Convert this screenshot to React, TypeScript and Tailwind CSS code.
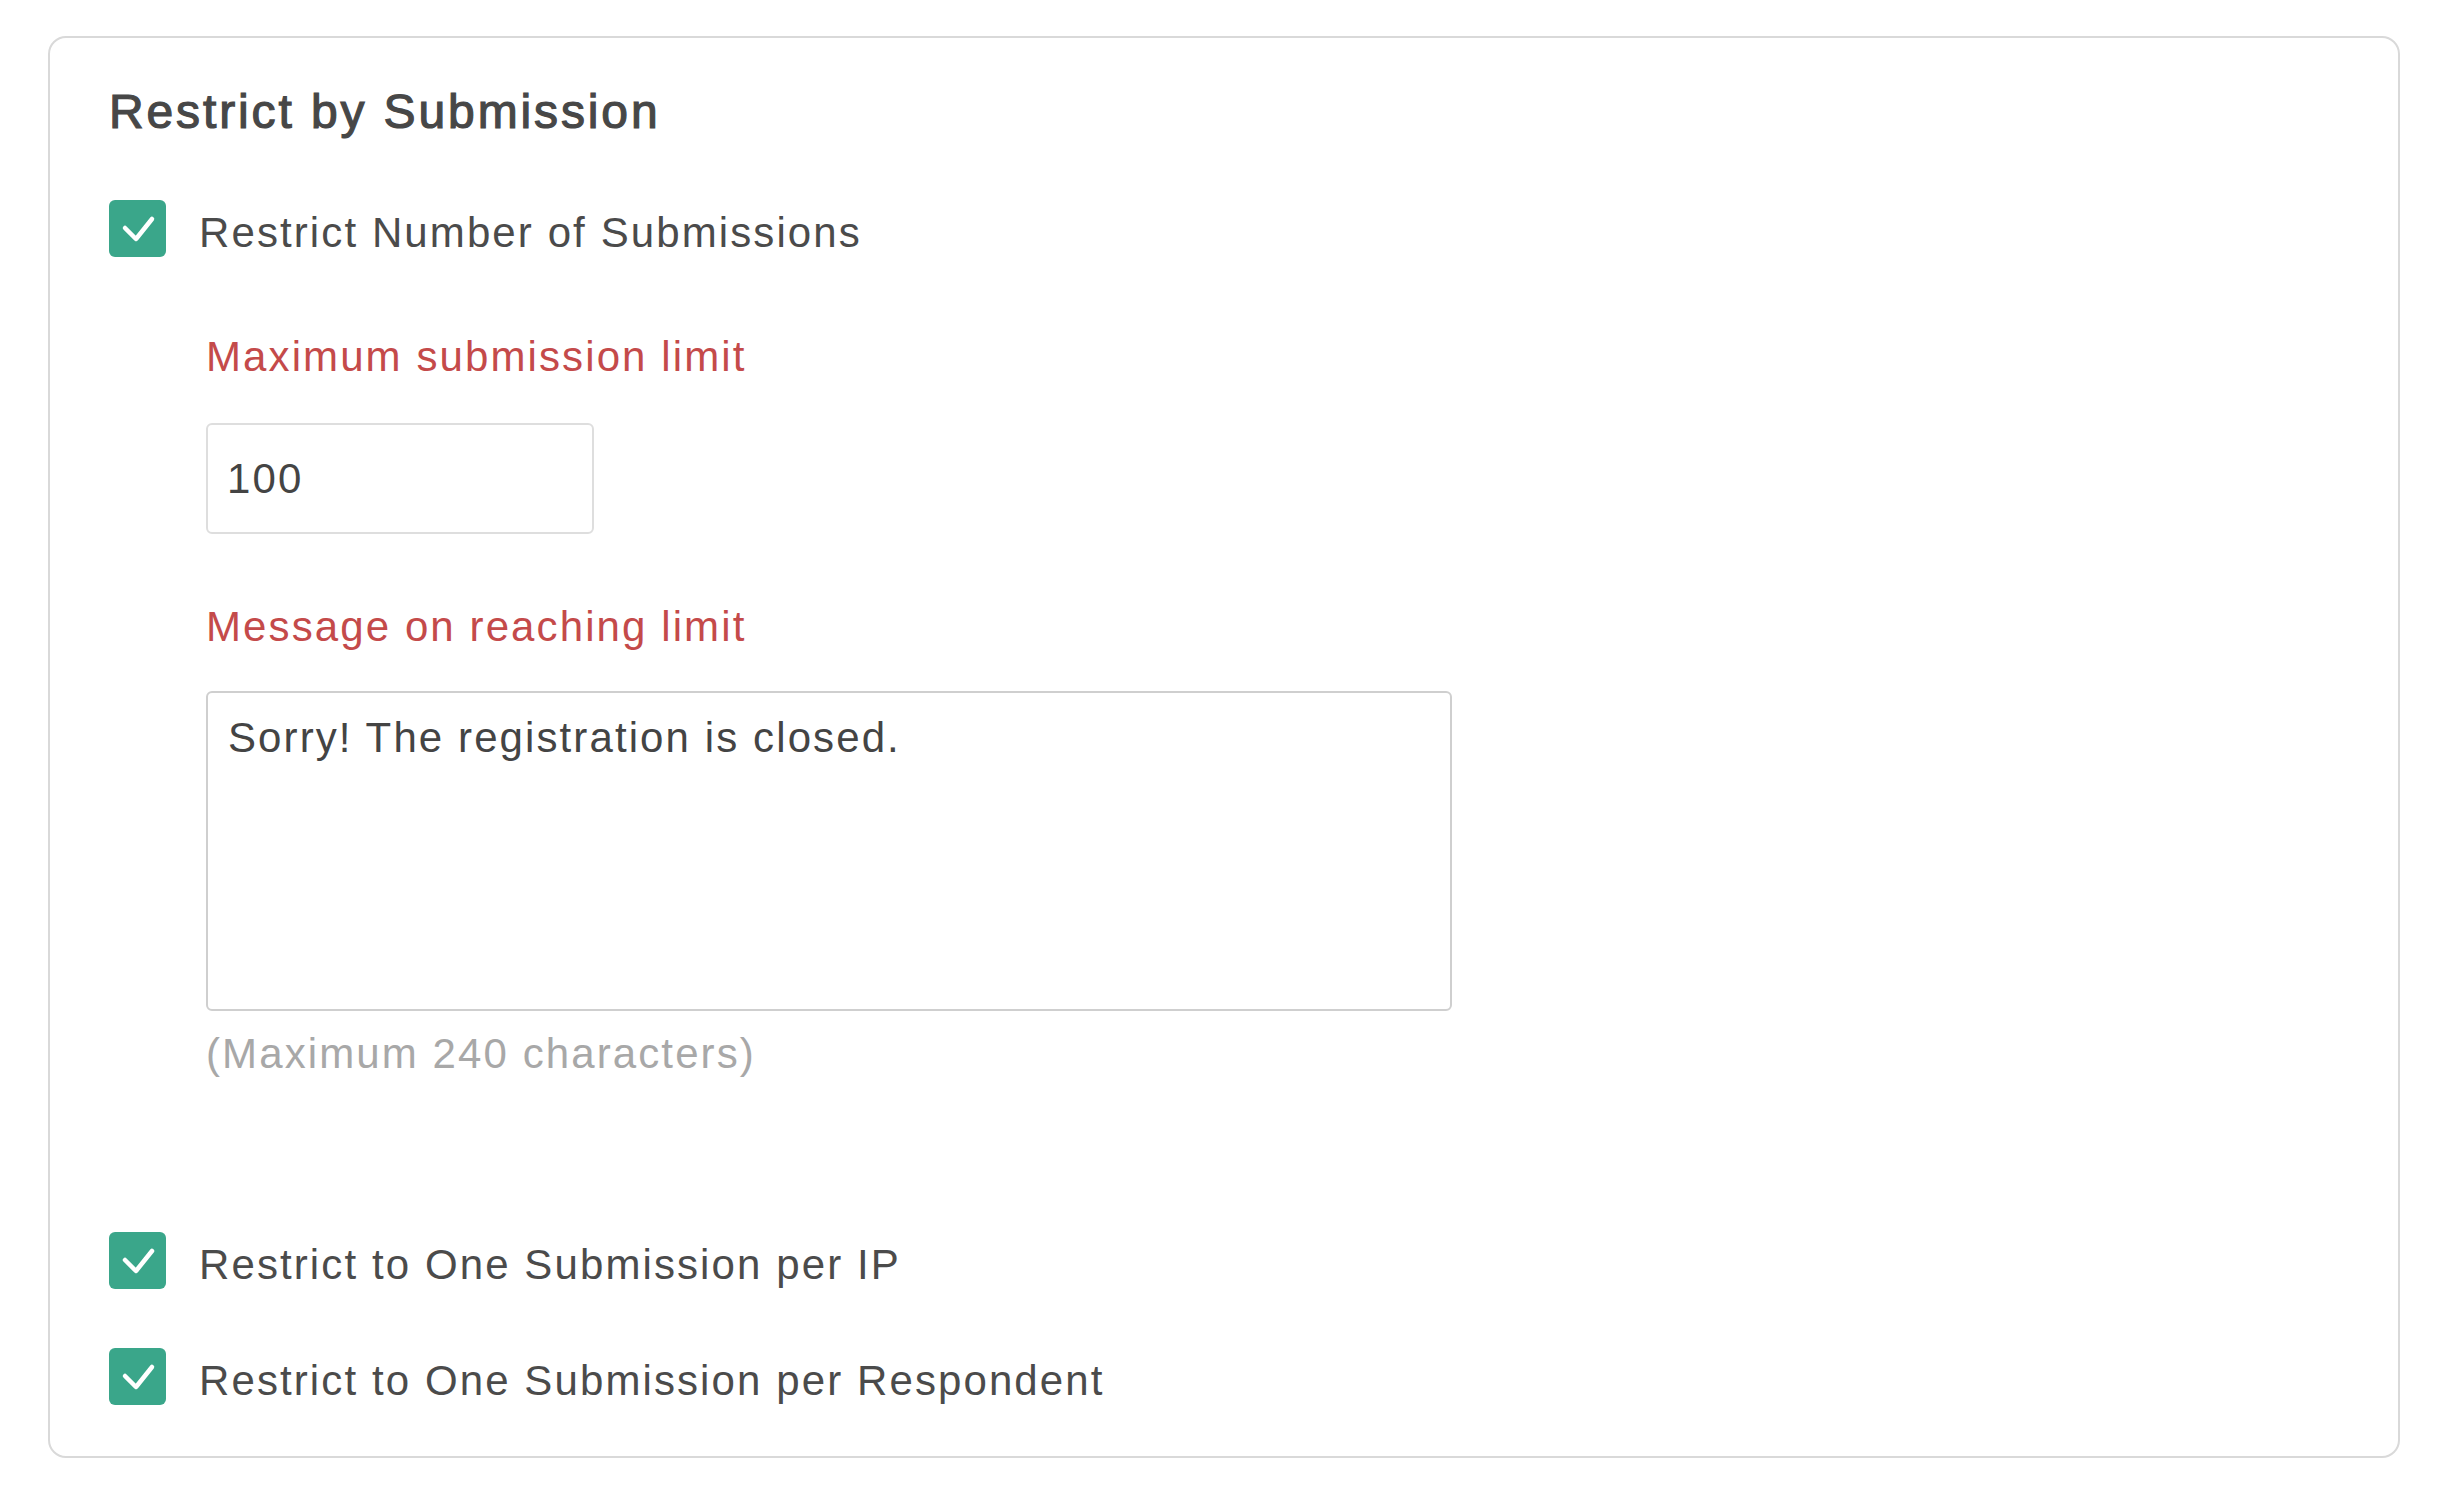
import React from 'react';

const Check = () => (
  <div className="w-[57px] h-[57px] shrink-0 rounded-[6px] bg-[#3aa68a]">
    <svg viewBox="0 0 57 57" className="w-full h-full" fill="none">
      <path d="M16 28l11 11 16-20" stroke="white" strokeWidth={4.5} strokeLinecap="round" strokeLinejoin="round" />
    </svg>
  </div>
);

const Option = ({ label, className = '' }: { label: string; className?: string }) => (
  <div className={`flex items-start ${className}`}>
    <Check />
    <span className="ml-[33px] mt-[12px] text-[42px] leading-[42px] tracking-[0.05em] text-[#4b4b4b]">{label}</span>
  </div>
);

export default function App() {
  return (
    <div className="min-h-screen bg-white pt-[36px] pl-[48px]" style={{ fontFamily: '"Liberation Sans", Arial, sans-serif' }}>
      <div className="w-[2352px] h-[1422px] border-2 border-[#d9d9d9] rounded-[18px] pl-[59px] pt-[50px] flex flex-col">
        <h2 className="text-[48px] leading-[48px] font-normal tracking-[0.06em] text-[#474747] [-webkit-text-stroke:1.2px_#474747]">Restrict by Submission</h2>

        <Option label="Restrict Number of Submissions" className="mt-[64px]" />

        <div className="ml-[97px] flex flex-col items-start">
          <label className="mt-[79px] text-[42px] leading-[42px] tracking-[0.05em] text-[#c44a4a]">Maximum submission limit</label>
          <input
            readOnly
            value="100"
            className="mt-[45px] w-[388px] h-[111px] border-2 border-[#dedede] rounded-[6px] pl-[19px] text-[42px] tracking-[0.05em] text-[#444] outline-none"
          />

          <label className="mt-[72px] text-[42px] leading-[42px] tracking-[0.05em] text-[#c44a4a]">Message on reaching limit</label>
          <textarea
            readOnly
            value="Sorry! The registration is closed."
            className="mt-[43px] w-[1246px] h-[320px] border-2 border-[#cfcfcf] rounded-[6px] pl-[20px] pt-[24px] text-[42px] leading-[42px] tracking-[0.05em] text-[#444] resize-none outline-none"
          />
          <p className="mt-[22px] text-[42px] leading-[42px] tracking-[0.05em] text-[#a8a8a8]">(Maximum 240 characters)</p>
        </div>

        <Option label="Restrict to One Submission per IP" className="mt-[157px]" />
        <Option label="Restrict to One Submission per Respondent" className="mt-[59px]" />
      </div>
    </div>
  );
}
